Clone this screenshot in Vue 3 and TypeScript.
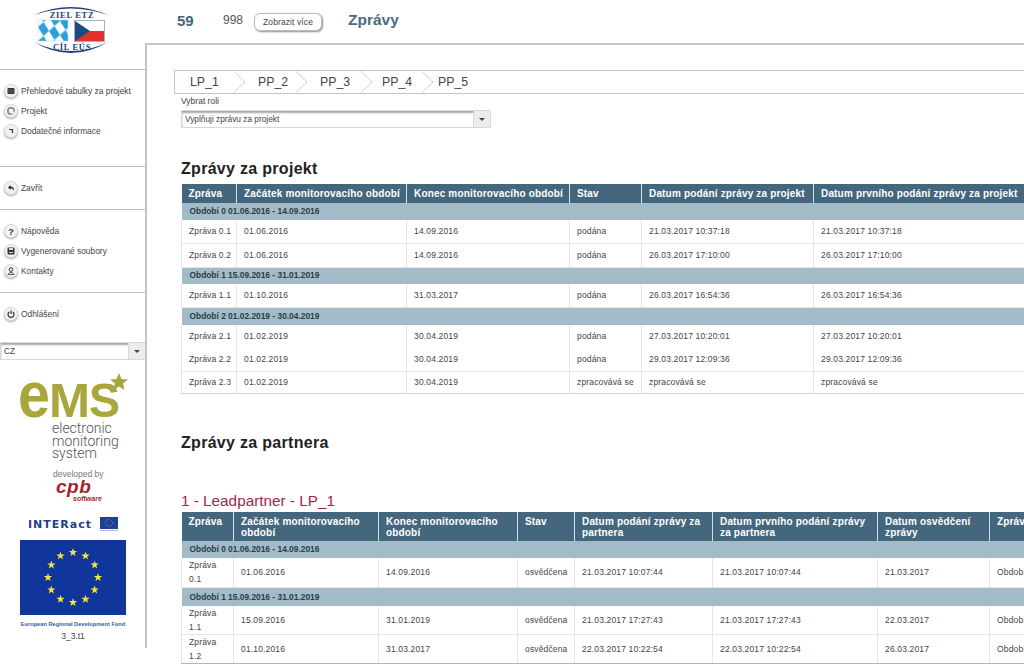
<template>
  <div class="page">
    <aside class="sidebar">
      <div class="logo-box">
        <svg width="78" height="56" viewBox="0 0 78 56">
          <path d="M1 12 Q38 -4 75 12 Q38 -1 1 12Z" fill="#1f3f73" />
          <path d="M1 39 Q38 61 75 39 Q38 57 1 39Z" fill="#1f3f73" />
          <text x="39" y="15" class="logo-text" text-anchor="middle">ZIEL ETZ</text>
          <text x="39" y="47" class="logo-text" text-anchor="middle">CÍL EÚS</text>
          <defs>
            <pattern id="loz" width="11" height="14" patternUnits="userSpaceOnUse" patternTransform="translate(5 17) skewY(20)">
              <rect width="11" height="14" fill="#fff" />
              <path d="M5.500 0 L11 7 L5.500 14 L0 7Z" fill="#2a9fd8" />
            </pattern>
          </defs>
          <rect x="5" y="17" width="30" height="21" fill="url(#loz)" stroke="#b9d6e8" stroke-width="0.500" />
          <rect x="41.500" y="17.500" width="30" height="21" fill="#fff" stroke="#9db4c6" />
          <rect x="42" y="28" width="29" height="10" fill="#e0332c" />
          <path d="M42 18 L57 28 L42 38Z" fill="#1f4a80" />
        </svg>
      </div>

      <nav class="nav-block nav-main">
        <div v-for="item in mainNav" :key="item.label" class="nav-item">
          <span class="nav-icon"><svg width="8" height="8" viewBox="0 0 8 8" v-html="item.icon" /></span>
          {{ item.label }}
        </div>
      </nav>
      <nav class="nav-block nav-close">
        <div class="nav-item">
          <span class="nav-icon"><svg width="8" height="8" viewBox="0 0 8 8" v-html="icons.back" /></span>
          Zavřít
        </div>
      </nav>
      <nav class="nav-block nav-help">
        <div v-for="item in helpNav" :key="item.label" class="nav-item">
          <span class="nav-icon"><svg width="8" height="8" viewBox="0 0 8 8" v-html="item.icon" /></span>
          {{ item.label }}
        </div>
      </nav>
      <nav class="nav-block nav-logout">
        <div class="nav-item">
          <span class="nav-icon"><svg width="8" height="8" viewBox="0 0 8 8" v-html="icons.power" /></span>
          Odhlášení
        </div>
      </nav>

      <div class="select lang-select">
        <span class="select-value">CZ</span>
        <span class="select-btn"><i class="caret" /></span>
      </div>

      <div class="brand">
        <svg class="ems" width="110" height="48" viewBox="0 0 110 48">
          <text x="-2" y="44" class="ems-text" font-size="65" textLength="32" lengthAdjust="spacingAndGlyphs">e</text>
          <text x="29" y="44" class="ems-text" font-size="49" textLength="41" lengthAdjust="spacingAndGlyphs">M</text>
          <text x="69" y="44" class="ems-text" font-size="49" textLength="31" lengthAdjust="spacingAndGlyphs">S</text>
          <polygon points="99,0 101.5,6 108,6.500 103,10.500 104.500,17 99,13.500 93.500,17 95,10.500 90,6.500 96.500,6" fill="#a9a63c" />
        </svg>
        <div class="ems-sub">electronic<br />monitoring<br />system</div>
        <div class="dev-by">developed by</div>
        <div class="cpb">cpb</div>
        <div class="cpb-sub">software</div>
        <div class="interact">
          <span class="interact-name">INTERact</span>
          <svg width="18" height="15" viewBox="0 0 18 15">
            <rect width="18" height="12" fill="#1d3f94" />
            <circle cx="9" cy="6" r="3.500" fill="none" stroke="#8d9c6a" stroke-width="0.800" stroke-dasharray="1 1" />
            <rect y="13" width="18" height="1" fill="#aeb7cf" />
          </svg>
        </div>
        <svg class="eu-flag" width="106" height="75" viewBox="0 0 106 75">
          <rect width="106" height="75" fill="#10369c" />
          <polygon
            v-for="(s, i) in euStars"
            :key="i"
            :points="s"
            fill="#f3e33a"
          />
        </svg>
        <div class="erdf">European Regional Development Fund</div>
        <div class="version">3_3.t1</div>
      </div>
    </aside>

    <main class="main">
      <header class="topbar">
        <span class="top-id">59</span>
        <span class="top-num">998</span>
        <button class="more-btn">Zobrazit více</button>
        <span class="top-title">Zprávy</span>
      </header>

      <div class="content">
        <div class="tabs">
          <template v-for="(tab, i) in tabs" :key="tab.name">
            <span class="tab" :style="{ width: tab.w + 'px', paddingLeft: tab.pad + 'px' }">{{ tab.name }}</span>
            <svg v-if="i < tabs.length - 1" class="tab-sep" width="13" height="22" viewBox="0 0 13 22">
              <polyline points="0.500,0 12,11 0.500,22" fill="none" stroke="#cfcfcf" />
            </svg>
          </template>
        </div>

        <div class="role-label">Vybrat roli</div>
        <div class="select role-select">
          <span class="select-value">Vyplňuji zprávu za projekt</span>
          <span class="select-btn"><i class="caret" /></span>
        </div>

        <h2 class="section-title first">Zprávy za projekt</h2>
        <table class="grid grid-project">
          <colgroup>
            <col v-for="w in projectCols" :key="w" :style="{ width: w + 'px' }" />
          </colgroup>
          <thead>
            <tr>
              <th v-for="h in projectHead" :key="h">{{ h }}</th>
            </tr>
          </thead>
          <tbody>
            <template v-for="(row, i) in projectRows" :key="i">
              <tr v-if="row.group" class="group" :style="{ height: row.h + 'px' }">
                <td :colspan="projectCols.length">{{ row.group }}</td>
              </tr>
              <tr v-else :class="{ plain: row.plain }" :style="{ height: row.h + 'px' }">
                <td v-for="(c, j) in row.cells" :key="j">{{ c }}</td>
              </tr>
            </template>
          </tbody>
        </table>

        <h2 class="section-title second">Zprávy za partnera</h2>
        <h3 class="partner-title">1 - Leadpartner - LP_1</h3>
        <table class="grid grid-partner">
          <colgroup>
            <col v-for="w in partnerCols" :key="w" :style="{ width: w + 'px' }" />
          </colgroup>
          <thead>
            <tr>
              <th v-for="h in partnerHead" :key="h">{{ h }}</th>
            </tr>
          </thead>
          <tbody>
            <template v-for="(row, i) in partnerRows" :key="i">
              <tr v-if="row.group" class="group" :style="{ height: row.h + 'px' }">
                <td :colspan="partnerCols.length">{{ row.group }}</td>
              </tr>
              <tr v-else :style="{ height: row.h + 'px' }">
                <td v-for="(c, j) in row.cells" :key="j">{{ c }}</td>
              </tr>
            </template>
          </tbody>
        </table>
      </div>
    </main>
  </div>
</template>

<script setup lang="ts">
interface Row {
  group?: string;
  cells?: string[];
  plain?: boolean;
  h: number;
}

const icons = {
  table: '<rect x="0.500" y="1" width="7" height="6" rx="1" fill="#333"/><path d="M1 3h6M1 5h6" stroke="#999" stroke-width="0.500"/>',
  project: '<rect x="1" y="1" width="6" height="6" rx="1.500" fill="none" stroke="#333"/><rect x="4.500" y="4.500" width="3" height="3" fill="#eee"/>',
  info: '<path d="M2 2.500h3.500v3.500" fill="none" stroke="#333" stroke-width="1.200"/>',
  back: '<path d="M1 3.500 L3.500 1 V2.500 C6 2.500 7.500 4 7 7 C6.500 5 5.500 4.500 3.500 4.500 V6Z" fill="#333"/>',
  help: '<text x="4" y="7.500" font-size="9" font-weight="700" font-family="Liberation Sans" text-anchor="middle" fill="#333">?</text>',
  files: '<rect x="0.500" y="0.500" width="7" height="7" rx="1" fill="#333"/><rect x="2" y="1" width="4" height="2" fill="#ddd"/><rect x="2" y="5" width="4" height="1" fill="#ddd"/>',
  contact: '<circle cx="4" cy="2.500" r="1.800" fill="none" stroke="#333"/><path d="M0.500 7.500h7M1.500 6.500 Q4 4 6.500 6.500" fill="none" stroke="#333" stroke-width="0.800"/>',
  power: '<path d="M2.200 2 A3 3 0 1 0 5.800 2" fill="none" stroke="#333" stroke-width="1.200"/><path d="M4 0.500 V4" stroke="#333" stroke-width="1.200"/>',
};

const mainNav = [
  { label: 'Přehledové tabulky za projekt', icon: icons.table },
  { label: 'Projekt', icon: icons.project },
  { label: 'Dodatečné informace', icon: icons.info },
];

const helpNav = [
  { label: 'Nápověda', icon: icons.help },
  { label: 'Vygenerované soubory', icon: icons.files },
  { label: 'Kontakty', icon: icons.contact },
];

function star(cx: number, cy: number, r: number): string {
  const pts: string[] = [];
  for (let i = 0; i < 10; i++) {
    const rad = i % 2 === 0 ? r : r * 0.4;
    const a = -Math.PI / 2 + (i * Math.PI) / 5;
    pts.push(`${(cx + rad * Math.cos(a)).toFixed(1)},${(cy + rad * Math.sin(a)).toFixed(1)}`);
  }
  return pts.join(' ');
}

const euStars = Array.from({ length: 12 }, (_, i) => {
  const a = (i * Math.PI) / 6;
  return star(53 + 25 * Math.sin(a), 37.5 - 25 * Math.cos(a), 4.4);
});

const tabs = [
  { name: 'LP_1', w: 58, pad: 15 },
  { name: 'PP_2', w: 49, pad: 12 },
  { name: 'PP_3', w: 52, pad: 12 },
  { name: 'PP_4', w: 48, pad: 9 },
  { name: 'PP_5', w: 50, pad: 4 },
];

const projectCols = [55, 170, 163, 72, 172, 220];
const projectHead = [
  'Zpráva',
  'Začátek monitorovacího období',
  'Konec monitorovacího období',
  'Stav',
  'Datum podání zprávy za projekt',
  'Datum prvního podání zprávy za projekt',
];

function pr(no: string, from: string, to: string, state: string, d1: string, h = 23, plain = false): Row {
  return { cells: [`Zpráva ${no}`, from, to, state, d1, d1], plain, h };
}

const projectRows: Row[] = [
  { group: 'Období 0 01.06.2016 - 14.09.2016', h: 17 },
  pr('0.1', '01.06.2016', '14.09.2016', 'podána', '21.03.2017 10:37:18'),
  pr('0.2', '01.06.2016', '14.09.2016', 'podána', '26.03.2017 17:10:00', 24),
  { group: 'Období 1 15.09.2016 - 31.01.2019', h: 17 },
  pr('1.1', '01.10.2016', '31.03.2017', 'podána', '26.03.2017 16:54:36'),
  { group: 'Období 2 01.02.2019 - 30.04.2019', h: 18 },
  pr('2.1', '01.02.2019', '30.04.2019', 'podána', '27.03.2017 10:20:01', 23, true),
  pr('2.2', '01.02.2019', '30.04.2019', 'podána', '29.03.2017 12:09:36'),
  pr('2.3', '01.02.2019', '30.04.2019', 'zpracovává se', 'zpracovává se', 22),
];

const partnerCols = [52, 145, 139, 57, 138, 165, 112, 120];
const partnerHead = [
  'Zpráva',
  'Začátek monitorovacího období',
  'Konec monitorovacího období',
  'Stav',
  'Datum podání zprávy za partnera',
  'Datum prvního podání zprávy za partnera',
  'Datum osvědčení zprávy',
  'Zpráva zprávy',
];

function par(no: string, from: string, to: string, d1: string, d2: string, h: number): Row {
  return { cells: [`Zpráva ${no}`, from, to, 'osvědčena', d1, d1, d2, 'Období'], h };
}

const partnerRows: Row[] = [
  { group: 'Období 0 01.06.2016 - 14.09.2016', h: 17 },
  par('0.1', '01.06.2016', '14.09.2016', '21.03.2017 10:07:44', '21.03.2017', 30),
  { group: 'Období 1 15.09.2016 - 31.01.2019', h: 18 },
  par('1.1', '15.09.2016', '31.01.2019', '21.03.2017 17:27:43', '22.03.2017', 29),
  par('1.2', '01.10.2016', '31.03.2017', '22.03.2017 10:22:54', '26.03.2017', 29),
];
</script>

<style scoped>
.page {
  display: flex;
  width: 1024px;
  height: 665px;
  overflow: hidden;
  background: #fff;
  font-family: 'Liberation Sans', Arial, sans-serif;
  color: #444;
}

.sidebar {
  position: relative;
  flex: 0 0 147px;
  height: 648px;
  box-sizing: border-box;
}

/* grey rule starts below the logo header */
.sidebar::after {
  content: '';
  position: absolute;
  top: 43px;
  right: 0;
  bottom: 0;
  width: 2px;
  background: #c4c4c4;
}

.logo-box {
  height: 69px;
  padding: 3px 0 0 33px;
  box-sizing: border-box;
}

.logo-text {
  font-family: 'Liberation Serif', serif;
  font-weight: 700;
  font-size: 8.500px;
  letter-spacing: 0.7px;
  fill: #1f3f73;
}

.nav-block {
  border-top: 1px solid #bdbdbd;
  box-sizing: border-box;
  padding-left: 4px;
}

.nav-main {
  height: 97px;
  padding-top: 11px;
}

.nav-close {
  height: 43px;
  padding-top: 11px;
}

.nav-help {
  height: 83px;
  padding-top: 11px;
}

.nav-logout {
  height: 50px;
  padding-top: 11px;
}

.nav-item {
  display: flex;
  align-items: center;
  gap: 3px;
  height: 20px;
  font-size: 8.400px;
  color: #444;
}

.nav-icon {
  display: flex;
  align-items: center;
  justify-content: center;
  width: 14px;
  height: 14px;
  border-radius: 50%;
  background: #f2f2f2;
  border: 1px solid #dcdcdc;
  box-shadow: 0 1px 2px rgba(0, 0, 0, 0.35);
  box-sizing: border-box;
}

.select {
  display: flex;
  background: #fff;
  box-sizing: border-box;
  box-shadow: inset 0 2px 2px rgba(0, 0, 0, 0.35);
  border: 1px solid #d8d8d8;
  font-size: 8.300px;
  color: #444;
}

.select-value {
  flex: 1;
  padding-left: 3px;
  align-self: center;
}

.select-btn {
  display: flex;
  align-items: center;
  justify-content: center;
  width: 16px;
  background: #ececec;
  border-left: 1px solid #d8d8d8;
}

.caret {
  width: 0;
  height: 0;
  border: 3px solid transparent;
  border-top: 3px solid #444;
  border-bottom: 0;
}

.lang-select {
  width: 146px;
  height: 18px;
}

.brand {
  display: flex;
  flex-direction: column;
  padding-left: 20px;
}

.ems {
  display: block;
  margin-top: 13px;
  overflow: visible;
}

.ems-text {
  font-family: 'Liberation Sans', sans-serif;
  font-weight: 700;
  fill: #a9a63c;
}

.ems-sub {
  margin: 1px 0 0 32px;
  font-family: Roboto, sans-serif;
  font-weight: 300;
  font-size: 14px;
  line-height: 12.500px;
  color: #555;
}

.dev-by {
  margin: 9px 0 0 33px;
  font-size: 8.500px;
  line-height: 10px;
  color: #777;
}

.cpb {
  margin: -1px 0 0 36px;
  font-style: italic;
  font-weight: 700;
  font-size: 19px;
  line-height: 17px;
  letter-spacing: 0.5px;
  color: #a81f2d;
}

.cpb-sub {
  margin: 0 0 0 53px;
  font-style: italic;
  font-weight: 700;
  font-size: 7px;
  line-height: 8px;
  color: #a81f2d;
}

.interact {
  display: flex;
  align-items: center;
  gap: 6px;
  margin: 14px 0 0 8px;
  height: 16px;
}

.interact-name {
  width: 66px;
  font-family: 'DejaVu Sans', sans-serif;
  font-weight: 700;
  font-size: 11px;
  letter-spacing: 1px;
  white-space: nowrap;
  color: #23408f;
}

.eu-flag {
  display: block;
  margin-top: 7px;
}

.erdf {
  width: 106px;
  margin-top: 6px;
  font-size: 5.700px;
  line-height: 7px;
  font-weight: 700;
  color: #3a5aa4;
  text-align: center;
  white-space: nowrap;
}

.version {
  width: 106px;
  margin-top: 3px;
  font-size: 8.500px;
  line-height: 10px;
  text-align: center;
  color: #444;
}

.main {
  flex: 1;
  min-width: 0;
}

.topbar {
  display: flex;
  align-items: center;
  height: 45px;
  padding: 0 0 3px 30px;
  box-sizing: border-box;
  border-bottom: 2px solid #c9c9c9;
}

.top-id {
  width: 46px;
  font-size: 15px;
  font-weight: 700;
  color: #44677d;
}

.top-num {
  width: 31px;
  font-size: 12px;
  color: #555;
}

.more-btn {
  width: 68px;
  height: 18px;
  margin-top: 3px;
  padding: 0;
  background: #fff;
  border: 1px solid #bbb;
  border-radius: 6px;
  box-shadow: 1px 1px 2px rgba(0, 0, 0, 0.45);
  font-family: inherit;
  font-size: 8.500px;
  letter-spacing: 0.1px;
  color: #444;
}

.top-title {
  margin-left: 26px;
  font-size: 15.500px;
  font-weight: 700;
  color: #4a6b80;
}

.content {
  padding: 25px 0 0 27px;
}

.tabs {
  display: flex;
  align-items: center;
  width: 900px;
  height: 24px;
  border: 1px solid #c4c4c4;
  border-right: 0;
  box-sizing: border-box;
  font-size: 12.300px;
  color: #444;
}

.tab {
  box-sizing: border-box;
  white-space: nowrap;
}

.tab-sep {
  flex: none;
}

.role-label {
  margin: 2px 0 0 7px;
  font-size: 8.500px;
  line-height: 10px;
  color: #444;
}

.role-select {
  width: 310px;
  height: 18px;
  margin: 4px 0 0 7px;
}

.section-title {
  margin: 0;
  font-size: 16px;
  line-height: 20px;
  font-weight: 700;
  letter-spacing: 0.3px;
  color: #222;
}

.section-title.first {
  margin: 31px 0 0 7px;
}

.section-title.second {
  margin: 39px 0 0 7px;
}

.partner-title {
  margin: 39px 0 0 7px;
  font-size: 15.300px;
  line-height: 18px;
  font-weight: 400;
  color: #a3264f;
}

.grid {
  table-layout: fixed;
  border-collapse: collapse;
  margin-left: 7px;
  font-size: 8.500px;
  letter-spacing: 0.15px;
  color: #444;
}

.grid-project {
  width: 852px;
  margin-top: 5px;
}

.grid-partner {
  width: 928px;
  margin-top: 2px;
}

.grid th {
  background: #44677d;
  color: #fff;
  font-size: 10px;
  font-weight: 700;
  letter-spacing: 0.17px;
  line-height: 11px;
  text-align: left;
  padding: 0 7px;
  height: 19px;
  border-left: 1px solid #d7e0e6;
  box-sizing: border-box;
  vertical-align: middle;
  overflow: hidden;
}

.grid-project th {
  white-space: nowrap;
}

.grid-partner th {
  height: 29px;
  padding: 4px 7px 0;
  vertical-align: top;
}

.grid th:first-child {
  border-left: 0;
}

.grid td {
  padding: 0 7px;
  border-left: 1px solid #e5e5e5;
  border-bottom: 1px solid #e5e5e5;
  box-sizing: border-box;
  line-height: 13px;
  white-space: nowrap;
  overflow: hidden;
}

.grid-partner td {
  line-height: 14px;
}

.grid-partner td:first-child {
  white-space: normal;
}

.grid tr.plain td {
  border-bottom: 0;
}

.grid tr.group td {
  background: #a3bbc9;
  border: 0;
  font-size: 8.400px;
  font-weight: 700;
  color: #2d3b45;
  letter-spacing: 0;
  padding-left: 8px;
}

.grid-project tr:last-child td {
  border-bottom-color: #d5d5d5;
}

.grid-partner tr:last-child td {
  border-bottom-color: #a3bbc9;
}
</style>

<style>
html,
body {
  margin: 0;
  background: #fff;
}
</style>
